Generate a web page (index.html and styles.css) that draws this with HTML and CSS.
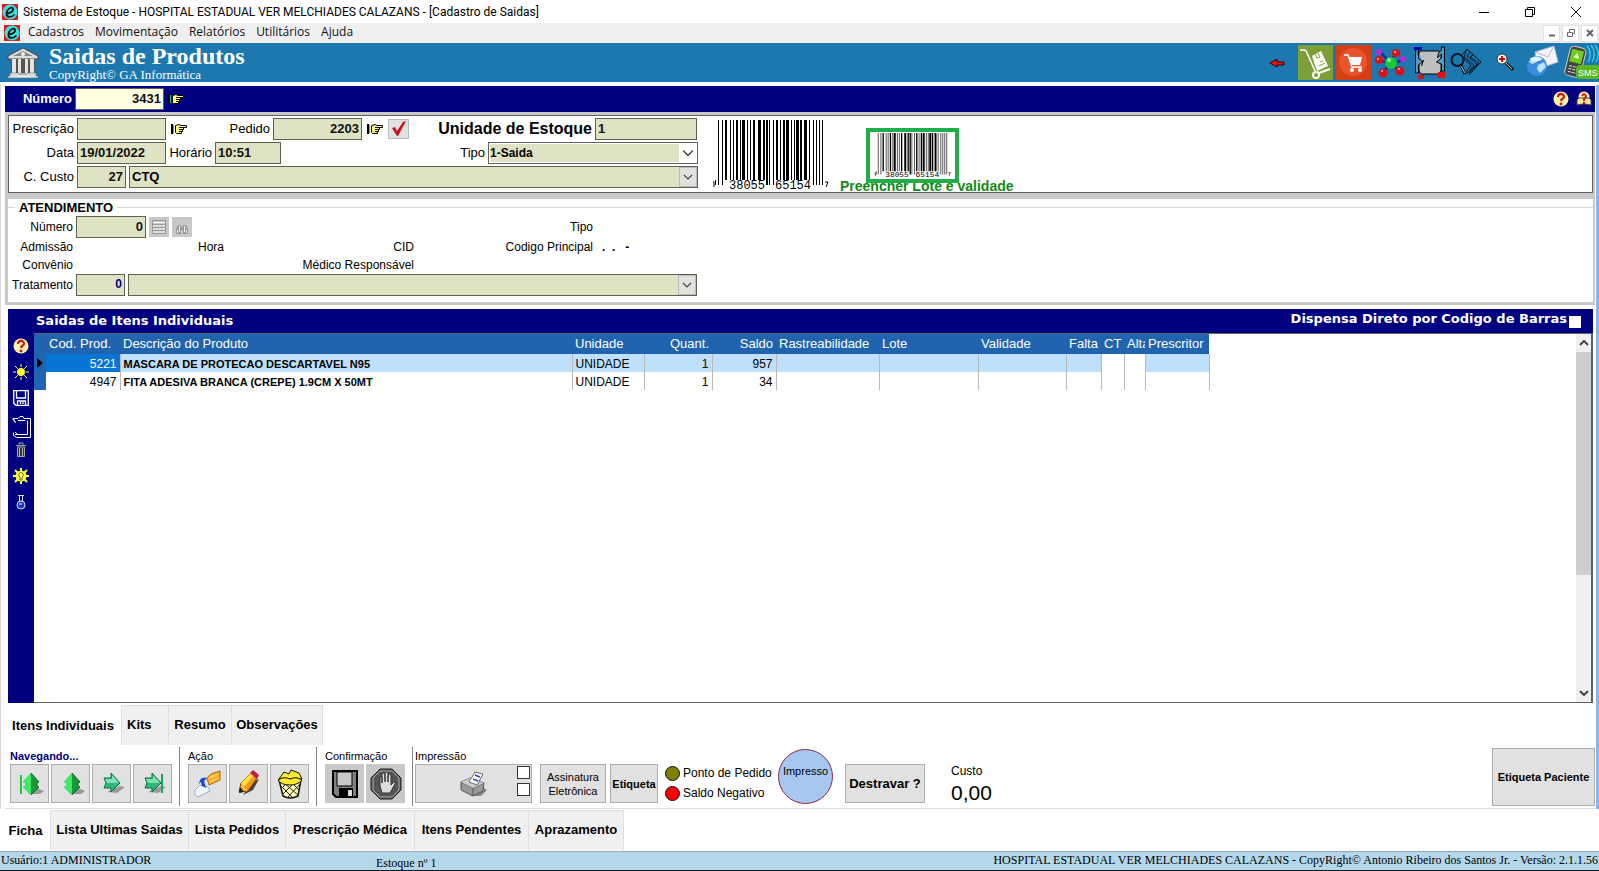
FILE: index.html
```html
<!DOCTYPE html>
<html lang="pt-BR">
<head>
<meta charset="utf-8">
<title>Sistema de Estoque</title>
<link rel="stylesheet" href="styles.css">
</head>
<body>
<svg class="defs" aria-hidden="true">
  <symbol id="logo" viewBox="0 0 16 16"><rect width="16" height="16" fill="#e01818"/><circle cx="8" cy="8" r="7.5" fill="#35e0e0"/><path d="M4.500 9.500C8 9.500 12 7 11 4.500C10 2.500 5.500 4 4.500 9C4 14 9 14 12.500 10.500" fill="none" stroke="#111" stroke-width="1.700"/></symbol>
  <symbol id="hand" viewBox="0 0 16 12"><path d="M0 1h2v10H0z" fill="#000"/><path d="M2 2h1v8H2z" fill="#28b8b8"/><path d="M4.500 2.500L8 1.500l2 1h5.500v2H10.500h2v2h-1v2h-1v2H5.500l-1-1z" fill="#ffff70" stroke="#000"/><path d="M8 4.500h3M8 6.500h4M8 8.500h3" stroke="#000"/></symbol>
  <symbol id="chev" viewBox="0 0 10 6"><path d="M1 1l4 4 4-4" fill="none" stroke="#444" stroke-width="1.200"/></symbol>
  <symbol id="help" viewBox="0 0 16 16"><circle cx="8" cy="8" r="7.500" fill="#fff3a8"/><path d="M5 6c0-4 6-4 6-.5C11 8 8 7.500 8 10" fill="none" stroke="#c81818" stroke-width="2.200"/><circle cx="8" cy="13" r="1.400" fill="#c81818"/></symbol>
  <symbol id="bars" viewBox="0 0 117 72"><path d="M6.500 0v65M10.500 0v65M18.500 0v60M21.500 0v60M28.500 0v60M35.500 0v60M38.500 0v60M57.500 0v65M61.500 0v65M68.500 0v60M79.500 0v60M82.500 0v60M97.500 0v60M101.500 0v65M104.500 0v65M107.500 0v65M110.500 0v65M3.500 60v5" stroke="#000"/><path d="M14 0v60M25 0v60M42 0v60M52 0v60M55 0v65M65 0v60M72 0v60M89 0v60" stroke="#000" stroke-width="2"/><path d="M31.500 0v60M47.500 0v60M75.500 0v60M85.500 0v60M93.500 0v60" stroke="#000" stroke-width="3"/><path d="M1 62h1v5M113 62h3l-2 5" fill="none" stroke="#000"/></symbol>
  <symbol id="arrow-up" viewBox="0 0 32 32"><path d="M14 26h12l4-3-7-3z" fill="#999"/><path d="M17 5l8 9-2 1v3l2 1-8 8-8-8 2-1v-3l-2-1z" fill="#189838"/><path d="M17 5v22l-8-8 2-1v-3l-2-1z" fill="#40e868"/><path d="M17 5l8 9-2 1v3l2 1-8 8" fill="none" stroke="#087020"/></symbol>
  <symbol id="arrow-right" viewBox="0 0 32 32"><path d="M11 24l10 1 8-6-5-1z" fill="#999"/><path d="M8 10h7V5l9 10-9 9v-4H8l2-5z" fill="#30b878" stroke="#087040"/><path d="M9 11h7V7l7 8H11z" fill="#80e0b0"/></symbol>
</svg>

<header class="titlebar">
  <svg class="logo"><use href="#logo"/></svg>
  <h1 class="window-title">Sistema de Estoque - HOSPITAL ESTADUAL VER MELCHIADES CALAZANS - [Cadastro de Saidas]</h1>
  <div class="window-controls">
    <button aria-label="Minimizar"><svg width="12" height="12"><path d="M1 6.500h10" stroke="#000"/></svg></button>
    <button aria-label="Restaurar"><svg width="12" height="12" fill="none" stroke="#000"><path d="M1.500 3.500h7v7h-7zM3.500 3V1.500h7v7H9"/></svg></button>
    <button aria-label="Fechar"><svg width="12" height="12"><path d="M1 1l10 10M11 1L1 11" stroke="#000"/></svg></button>
  </div>
</header>

<nav class="menubar">
  <svg class="logo"><use href="#logo"/></svg>
  <a href="#">Cadastros</a><a href="#">Movimentação</a><a href="#">Relatórios</a><a href="#">Utilitários</a><a href="#">Ajuda</a>
  <div class="mdi">
    <button aria-label="Minimizar janela"><svg width="10" height="10"><path d="M2 7.500h6" stroke="#667" stroke-width="2"/></svg></button>
    <button aria-label="Restaurar janela"><svg width="10" height="10" fill="none" stroke="#667"><path d="M1.500 4.500h5v4h-5zM3.500 4V1.500h5v4H7"/></svg></button>
    <button aria-label="Fechar janela"><svg width="10" height="10"><path d="M2 2l6 6M8 2L2 8" stroke="#667" stroke-width="2"/></svg></button>
  </div>
</nav>

<div class="banner">
  <svg class="temple" viewBox="0 0 32 32"><path d="M1 9L16 1l15 8v3H1z" fill="#ddd" stroke="#444"/><path d="M6 9l10-5 10 5z" fill="#888"/><circle cx="16" cy="7" r="2" fill="#eee"/><path d="M4 12h24v15H4z" fill="#555"/><path d="M5 12h4v14H5zM11 12h3v14h-3zM18 12h3v14h-3zM23 12h4v14h-4z" fill="#e8e4dc"/><path d="M3 26h9v2h8v-2h9v3h2v2H1v-2h2z" fill="#ddd" stroke="#666" stroke-width=".5"/><path d="M12 27h8M11 29h10" stroke="#fff"/></svg>
  <div class="banner-text">
    <h2>Saidas de Produtos</h2>
    <p>CopyRight© GA Informática</p>
  </div>
  <div class="toolbar">
    <button class="tool narrow" aria-label="Voltar"><svg width="16" height="10"><path d="M1 5l7-4v3h7v3H8v2z" fill="#f01010" stroke="#300"/></svg></button>
    <button class="tool" aria-label="Transporte"><svg viewBox="0 0 35 35"><rect width="35" height="35" fill="#7c9f37"/><path d="M2 5h4q2 0 3 3l9 20" fill="none" stroke="#fff" stroke-width="1.600"/><circle cx="18" cy="30" r="3" fill="none" stroke="#fff" stroke-width="2"/><path d="M21 28l11-4" stroke="#fff" stroke-width="2"/><path d="M14 11l9-5 7 15-11 5z" fill="#fff"/><path d="M17 9l2 4 3-1-2-4M22 17l3-1M21 21l6-3" stroke="#7c9f37" fill="none"/></svg></button>
    <button class="tool" aria-label="Compras"><svg viewBox="0 0 35 35"><rect width="35" height="35" fill="#d63f14"/><circle cx="17" cy="17" r="14" fill="#e8542c"/><path d="M8 10h4l4 12h10" fill="none" stroke="#fff" stroke-width="1.500"/><path d="M13 12h13l-2 8h-9z" fill="#fff"/><circle cx="16" cy="25" r="2" fill="#fff"/><circle cx="24" cy="25" r="2" fill="#fff"/></svg></button>
    <button class="tool" aria-label="Moléculas"><svg viewBox="0 0 35 35"><path d="M6 7l10 10L22 8M5 15l11 4 14-4M9 28l7-10 10 8" stroke="#222a90" stroke-width="2.500" fill="none"/><circle cx="17" cy="18" r="6" fill="#18c838"/><circle cx="15" cy="15" r="2" fill="#90ff90"/><g fill="#d81414"><circle cx="22" cy="8" r="4"/><circle cx="5" cy="15" r="4"/><circle cx="9" cy="28" r="4.500"/><circle cx="26" cy="26" r="4.500"/></g><g fill="#c028d8"><circle cx="5" cy="7" r="3"/><circle cx="29" cy="14" r="3"/></g><g fill="#fbb"><circle cx="21" cy="7" r="1"/><circle cx="4" cy="14" r="1"/><circle cx="8" cy="26" r="1"/><circle cx="25" cy="24" r="1"/></g></svg></button>
    <button class="tool" aria-label="Ferramentas"><svg viewBox="0 0 35 35"><path d="M8 6h19l2 3v17l-3 3H9l-2-3V9z" fill="#c0c0c0" stroke="#000"/><path d="M2 2h8v3H2z" fill="#0010b0"/><path d="M3.500 5v23h3v-8l5-5-2 6M6.500 5v8l4 4M32.500 2v24h-3v-7l-5-2 5-4V9l-4 4 1-5 3-3V2z" fill="#4f9fcb" stroke="#000"/><path d="M6 30h6v4H6zM26 27h7v6h-7z" fill="#e01010"/></svg></button>
    <button class="tool" aria-label="Consultar livros"><svg viewBox="0 0 35 35" fill="none" stroke="#06151f"><path d="M13 9l4-5 14 13-12 13M12 12l9 8-6 9M17 4l-3 8 10 8-7 9M20 7l-3 4 10 8-8 9M23 10l-3 2 9 6-9 9"/><circle cx="7.500" cy="15" r="6" stroke-width="2"/><path d="M11 20l4 9" stroke-width="3"/><path d="M11 21l4 7" stroke="#ccc"/></svg></button>
    <button class="tool" aria-label="Ampliar"><svg viewBox="0 0 35 35"><circle cx="14" cy="14" r="5" fill="#fff" stroke="#333"/><path d="M14 11v6M11 14h6" stroke="#d00" stroke-width="2"/><path d="M18 18l7 7" stroke="#111" stroke-width="3"/><path d="M18 18l6 6" stroke="#eec890"/></svg></button>
    <button class="tool" aria-label="E-mail"><svg viewBox="0 0 35 35"><path d="M9 7L28 1l4 16-20 7z" fill="#f4f5fc" stroke="#b5b8d0"/><path d="M9 7l13 5 6-11" fill="none" stroke="#b5b8d0"/><circle cx="11" cy="21" r="10" fill="#3a8be0"/><path d="M3 17q5-8 10-5l-2 5-5 2zM12 20l6-3 2 5-6 6-3-4z" fill="#b9e4ff"/><ellipse cx="10" cy="14" rx="6" ry="2" fill="#e5f6ff"/></svg></button>
    <button class="tool" aria-label="SMS"><svg viewBox="0 0 35 35"><g transform="rotate(14 12 18)"><rect x="3" y="2" width="16" height="30" rx="4" fill="#444" stroke="#ccc"/><rect x="5" y="5" width="12" height="13" fill="#72cc22"/><path d="M6 22h10M6 25h10M6 28h10" stroke="#ddd" stroke-dasharray="3 1"/><path d="M11 8l3 5H8z" fill="#efffca"/></g><path d="M23 1q6 7 1 16M27 0q6 8 1 17M31 0q6 8 1 17" fill="none" stroke="#30c8e8" stroke-width="1.500"/><rect x="12" y="20" width="25" height="14" rx="4" fill="#5ab81c"/><text x="14" y="31" font-family="Liberation Sans, sans-serif" font-size="9" fill="#fff">SMS</text></svg></button>
  </div>
</div>

<main class="page">
  <section class="number-bar">
    <label for="numero">Número</label>
    <input id="numero" class="field num cream" value="3431">
    <svg class="hand"><use href="#hand"/></svg>
    <div class="number-help">
      <svg class="ic16"><use href="#help"/></svg>
      <svg class="ic16" viewBox="0 0 16 16"><circle cx="8" cy="6" r="5.500" fill="#fff3a8"/><path d="M1 14V9l2-2h10l2 2v5l-6-1H7z" fill="#ffe9a0" stroke="#543"/><path d="M6 5q2-4 4 0 0 2-2 3v2M8 11v2" stroke="#c81818" stroke-width="2" fill="none"/></svg>
    </div>
  </section>

  <div class="panels">
    <section class="order">
      <div class="order-form">
        <div class="row">
          <label class="lead" for="presc">Prescrição</label><input id="presc" class="field code">
          <svg class="hand"><use href="#hand"/></svg>
          <label class="lab-pedido" for="pedido">Pedido</label><input id="pedido" class="field code num" value="2203">
          <svg class="hand"><use href="#hand"/></svg>
          <button class="check" aria-label="Confirmar pedido"><svg width="19" height="18"><path d="M3 8l3-1 2 4 6-9 3-1-8 15H8z" fill="#c81020"/></svg></button>
          <label class="lab-unit" for="unid">Unidade de Estoque</label><input id="unid" class="field unit" value="1">
        </div>
        <div class="row">
          <label class="lead" for="data">Data</label><input id="data" class="field code" value="19/01/2022">
          <label class="lab-time" for="hora">Horário</label><input id="hora" class="field time" value="10:51">
          <label class="lab-type" for="tipo">Tipo</label>
          <span class="select framed"><select id="tipo"><option>1-Saida</option></select><svg><use href="#chev"/></svg></span>
        </div>
        <div class="row">
          <label class="lead" for="custo">C. Custo</label><input id="custo" class="field short num" value="27">
          <span class="select wide"><select aria-label="Centro de custo"><option>CTQ</option></select><svg><use href="#chev"/></svg></span>
        </div>
      </div>
      <svg class="barcode" viewBox="0 0 117 72"><use href="#bars" width="117" height="72"/><g class="digits"><text x="17" y="69">38055</text><text x="63" y="69">65154</text></g></svg>
      <div class="fill-lot">
        <button class="lot-btn" aria-label="Preencher lote"><svg viewBox="0 0 117 72" preserveAspectRatio="none"><use href="#bars" width="117" height="72"/><g class="digits"><text x="17" y="69">38055</text><text x="63" y="69">65154</text></g></svg></button>
        <p>Preencher Lote e validade</p>
      </div>
    </section>

    <fieldset class="care">
      <legend>ATENDIMENTO</legend>
      <div class="care-grid">
        <label for="atn">Número</label>
        <div class="care-number"><input id="atn" class="field num" value="0">
          <button class="mini" aria-label="Calendário"><svg width="16" height="16" fill="none" stroke="#fff"><path d="M1.500 1.500h13v13h-13zM1 5.500h14M1 8.500h14M1 11.500h14M4.500 5v10M7.500 5v10M10.500 5v10" stroke="#999"/><path d="M2 3.500h12M2 7h12M2 10h12M2 13h12"/></svg></button>
          <button class="mini" aria-label="Procurar"><svg width="16" height="16"><path d="M2 15v-5l2-4h3v2h2V6h3l2 4v5h-5v-4H7v4z" fill="#999"/><path d="M3.500 11v3M12.500 11v3M5.500 7v6M10.500 7v6" stroke="#eee"/></svg></button>
        </div>
        <span class="tipo">Tipo</span>
        <span class="first">Admissão</span><span>Hora</span><span>CID</span><span>Codigo Principal</span><span class="dots">.&nbsp; .&nbsp;&nbsp; -</span>
        <span class="first">Convênio</span><span></span><span>Médico Responsável</span>
        <label class="first" for="trat">Tratamento</label>
        <div class="treatment"><input id="trat" class="field short num navy" value="0">
          <span class="select wide"><select aria-label="Tratamento"><option></option></select><svg><use href="#chev"/></svg></span></div>
      </div>
    </fieldset>
  </div>

  <section class="items">
    <div class="items-head">
      <h3>Saidas de Itens Individuais</h3>
      <label>Dispensa Direto por Codigo de Barras <input type="checkbox"></label>
    </div>
    <div class="items-body">
      <div class="side">
        <button aria-label="Ajuda"><svg class="ic16"><use href="#help"/></svg></button>
        <button aria-label="Novo"><svg class="ic16" viewBox="0 0 16 16"><path d="M8 0v16M0 8h16M2 2l12 12M14 2L2 14" stroke="#ff4"/><circle cx="8" cy="8" r="4.500" fill="#ff3" stroke="#000080"/></svg></button>
        <button aria-label="Salvar"><svg class="ic16" viewBox="0 0 16 16" fill="none" stroke="#fff" stroke-width="1.300"><path d="M.7.7h14.600v14.600H3l-2.300-2zM3.500 1v7h9V1M4.500 15v-4h8v4M7.500 12v2M10 12v2"/></svg></button>
        <button aria-label="Colar"><svg width="19" height="22" fill="none" stroke="#fff"><path d="M3 5.500L1 3.500V2.500h5l2-2h3l1 2h6.500v19H4.500l-3-2v-3M1.500 3l2 4M6 4.500h7M3 18.500h12.500v-14M3 16l2 2"/></svg></button>
        <button aria-label="Excluir"><svg class="ic16" viewBox="0 0 16 16" fill="#333" stroke="#aaa"><path d="M3 3.500h10M6 2.500V1h4v1.500M4.500 5h7v9.500h-7zM6.500 6v8M9.500 6v8"/></svg></button>
        <button aria-label="Dica"><svg class="ic16" viewBox="0 0 16 16"><path d="M8 0v16M0 8h16M2 2l12 12M14 2L2 14" stroke="#ff4" stroke-width="2"/><circle cx="8" cy="8" r="5.500" fill="#ff3"/><path d="M7 12V9.500q-3-4 1-5 4 1 1 5V12z" fill="#ffa" stroke="#662"/></svg></button>
        <button aria-label="Fórmula"><svg class="ic16" viewBox="0 0 16 16"><path d="M5 1.500h6M6.500 2v5M9.500 2v5" stroke="#ddd"/><circle cx="8" cy="11" r="4" fill="#1838d8" stroke="#ddd"/><path d="M6 10h3" stroke="#fff"/></svg></button>
      </div>
      <div class="grid-wrap">
        <table class="grid">
          <colgroup><col class="c-ind"><col class="c-cod"><col class="c-desc"><col class="c-uni"><col class="c-qt"><col class="c-sal"><col class="c-ras"><col class="c-lot"><col class="c-val"><col class="c-fal"><col class="c-ct"><col class="c-alt"><col class="c-pre"></colgroup>
          <thead><tr><th></th><th>Cod. Prod.</th><th>Descrição do Produto</th><th>Unidade</th><th class="r">Quant.</th><th class="r">Saldo</th><th>Rastreabilidade</th><th>Lote</th><th>Validade</th><th>Falta</th><th>CT</th><th>Alta</th><th>Prescritor</th></tr></thead>
          <tbody>
            <tr class="current"><td class="ind"><svg width="6" height="10"><path d="M0 0l6 5-6 5z"/></svg></td><td class="r key">5221</td><td class="desc">MASCARA DE PROTECAO DESCARTAVEL N95</td><td>UNIDADE</td><td class="r">1</td><td class="r">957</td><td></td><td></td><td></td><td></td><td class="blank"></td><td class="blank"></td><td></td></tr>
            <tr><td class="ind"></td><td class="r">4947</td><td class="desc">FITA ADESIVA BRANCA (CREPE) 1.9CM X 50MT</td><td>UNIDADE</td><td class="r">1</td><td class="r">34</td><td></td><td></td><td></td><td></td><td></td><td></td><td></td></tr>
          </tbody>
        </table>
        <div class="scroll">
          <svg width="10" height="6"><path d="M1 5l4-4 4 4" fill="none" stroke="#444" stroke-width="2"/></svg>
          <div class="thumb"></div>
          <svg width="10" height="6"><path d="M1 1l4 4 4-4" fill="none" stroke="#444" stroke-width="2"/></svg>
        </div>
      </div>
    </div>
  </section>

  <div class="tabs inner">
    <button class="active t-itens">Itens Individuais</button><button class="t-kits">Kits</button><button class="t-res">Resumo</button><button class="t-obs">Observações</button>
  </div>

  <section class="actions">
    <div class="group">
      <h4 class="nav">Navegando...</h4>
      <div class="btns">
        <button aria-label="Primeiro"><svg viewBox="0 0 32 32"><use href="#arrow-up"/><path d="M7 7v19" stroke="#20c840" stroke-width="2"/></svg></button>
        <button aria-label="Anterior"><svg viewBox="0 0 32 32"><use href="#arrow-up"/></svg></button>
        <button aria-label="Próximo"><svg viewBox="0 0 32 32"><use href="#arrow-right"/></svg></button>
        <button aria-label="Último"><svg viewBox="0 0 32 32"><use href="#arrow-right"/><path d="M25 6v19" stroke="#18a850" stroke-width="2"/></svg></button>
      </div>
    </div>
    <div class="group">
      <h4>Ação</h4>
      <div class="btns">
        <button aria-label="Abrir"><svg viewBox="0 0 32 32"><path d="M15 10l4-4 9-3v9l-11 5z" fill="#ffae28" stroke="#b86808"/><path d="M17 10l9-4M18 14l9-4" stroke="#ffe090"/><path d="M3 22l5-5 8 2 2 4-12 6-3-2z" fill="#eef8ff" stroke="#9ac"/><path d="M7 16q1-8 8-6l-3 3 2 7-4-2-1-4z" fill="#1848d0"/></svg></button>
        <button aria-label="Editar"><svg viewBox="0 0 32 32"><path d="M10 27l10-5 6-11-6 2z" fill="#444"/><path d="M6 24l2-9L18 5l6 5-9 13z" fill="#f59a18" stroke="#854008"/><path d="M8 15L18 5l3 2-10 12z" fill="#ffe040"/><path d="M17 5l3-3 6 5-2 4z" fill="#c02040"/><path d="M6 25l1-6 4 5z" fill="#221"/><path d="M8 18l6 5" stroke="#fff3a0"/></svg></button>
        <button aria-label="Excluir"><svg viewBox="0 0 32 32"><path d="M5 11L10 4l5 2 2-4 8 3 3 6z" fill="#ffee30" stroke="#111"/><path d="M5 12h22l-3 16q-8 4-15 0z" fill="#fff8b0" stroke="#111" stroke-width="1.500"/><path d="M6 17l12 12M8 13l16 14M16 13l9 9M26 16L13 30M22 13L8 27M15 13l-8 8" stroke="#222"/><path d="M4 12q6-4 12-1 6-3 12 1-4 5-12 5-9 0-12-5z" fill="#ffe830" stroke="#111"/></svg></button>
      </div>
    </div>
    <div class="group">
      <h4>Confirmação</h4>
      <div class="btns">
        <button class="off" aria-label="Gravar"><svg viewBox="0 0 32 32"><path d="M4 3h24v26H7l-3-3z" fill="#808080" stroke="#000" stroke-width="2"/><path d="M8 4h15v14H8z" fill="#c8c8c8" stroke="#000"/><path d="M10 20h14v9H10z" fill="#000"/><path d="M19 22h4v6h-4z" fill="#ddd"/></svg></button>
        <button class="off" aria-label="Cancelar"><svg viewBox="0 0 32 32"><path d="M10 1h12l9 9v12l-9 9H10l-9-9V10z" fill="#555" stroke="#222"/><path d="M10 3h12l7 7v12l-7 7H10l-7-7V10z" fill="none" stroke="#aaa"/><path d="M10 18V9q1-2 2 0v6V6q2-2 3 0v8-9q2-2 3 0v9-7q2-2 3 0v10l3-3q3 0 1 2l-5 9h-8z" fill="#ddd" stroke="#333"/></svg></button>
      </div>
    </div>
    <div class="group print">
      <h4>Impressão</h4>
      <div class="btns">
        <div class="print-box">
          <button class="print-btn" aria-label="Imprimir"><svg viewBox="0 0 32 32"><path d="M13 28h10l6-6-6-4z" fill="#888"/><path d="M3 14l9-4 14 5-1 8-10 5-12-6z" fill="#999" stroke="#555"/><path d="M3 14l12 6 11-5M15 20v8" fill="none" stroke="#555"/><path d="M3 14l9-4 14 5-11 5z" fill="#ccc"/><path d="M11 14l6-10 8 2-6 11z" fill="#fff" stroke="#667"/><path d="M17 7l5 2M15 11l5 2" stroke="#34d" stroke-width="1.500"/></svg></button>
          <span class="print-checks"><input type="checkbox" aria-label="Imprimir opção 1"><input type="checkbox" aria-label="Imprimir opção 2"></span>
        </div>
      </div>
    </div>
    <button class="text-btn sign">Assinatura Eletrônica</button>
    <button class="text-btn tag">Etiqueta</button>
    <ul class="legend"><li><i class="olive"></i>Ponto de Pedido</li><li><i class="red"></i>Saldo Negativo</li></ul>
    <div class="printed">Impresso</div>
    <button class="text-btn unlock">Destravar ?</button>
    <div class="cost"><span>Custo</span><output>0,00</output></div>
    <button class="text-btn patient">Etiqueta Paciente</button>
  </section>
</main>

<div class="tabs outer">
  <button class="active o-ficha">Ficha</button><button class="o-ult">Lista Ultimas Saidas</button><button class="o-ped">Lista Pedidos</button><button class="o-presc">Prescrição Médica</button><button class="o-pend">Itens Pendentes</button><button class="o-apr">Aprazamento</button>
</div>

<footer class="status">
  <span class="user">Usuário:1 ADMINISTRADOR</span><span class="stock">Estoque nº 1</span><span class="about">HOSPITAL ESTADUAL VER MELCHIADES CALAZANS - CopyRight© Antonio Ribeiro dos Santos Jr. - Versão: 2.1.1.56</span>
</footer>
</body>
</html>
```
FILE: styles.css
```css
* { box-sizing: border-box; }
body { margin: 0; min-height: 100vh; display: flex; flex-direction: column; background: #fff; color: #000; font: 13px/16px "Liberation Sans", Arial, sans-serif; overflow-x: hidden; }
h1, h2, h3, h4, p, ul { margin: 0; padding: 0; font-weight: normal; }
button { padding: 0; border: 0; background: none; font: inherit; color: inherit; }
input, select { margin: 0; font: inherit; color: inherit; }
svg { display: block; flex: none; }
.defs { position: absolute; width: 0; height: 0; }
.ic16 { width: 16px; height: 16px; }

.titlebar { display: flex; align-items: center; height: 23px; padding-left: 2px; font-family: Roboto, "Noto Sans", sans-serif; }
.logo { width: 16px; height: 16px; }
.window-title { margin-left: 5px; font-size: 12px; line-height: 16px; white-space: nowrap; }
.window-controls { margin-left: auto; display: flex; align-self: stretch; }
.window-controls button { width: 46px; display: flex; align-items: center; justify-content: center; }
.menubar { display: flex; align-items: center; height: 20px; padding-left: 4px; background: #efefef; font: 12px/16px "Open Sans", "Noto Sans", sans-serif; }
.menubar a { margin-left: 8px; margin-right: 3px; padding-bottom: 2px; color: #111; text-decoration: none; }
.mdi { margin-left: auto; display: flex; gap: 2px; padding-right: 1px; }
.mdi button { width: 17px; height: 17px; display: flex; align-items: center; justify-content: center; background: #fff; border: 1px solid #e2e2e2; }

.banner { display: flex; align-items: center; height: 39px; padding-left: 7px; background: #1c78ae; color: #fff; }
.temple { width: 32px; height: 32px; }
.banner-text { margin-left: 10px; padding-bottom: 1px; font-family: "Liberation Serif", "Times New Roman", serif; white-space: nowrap; }
.banner-text h2 { font-size: 24px; line-height: 24px; font-weight: bold; }
.banner-text p { font-size: 13px; line-height: 13px; }
.toolbar { margin-left: auto; display: flex; align-items: center; gap: 3px; }
.tool svg { width: 35px; height: 35px; }
.tool.narrow { margin-right: 10px; }
.tool.narrow svg { width: 16px; height: 10px; }

.page { flex: 1; display: flex; flex-direction: column; margin-top: 3px; padding: 1px 1px 0 4px; border-left: 1px solid #d8d8d8; border-right: 3px solid #8ab6ea; }
.number-bar { display: flex; align-items: center; gap: 3px; height: 26px; background: #000080; color: #fff; font-weight: bold; }
.number-bar label { width: 67px; text-align: right; }
.hand { width: 16px; height: 12px; }
.number-bar .hand { margin-left: 1px; }
.number-help { margin-left: auto; display: flex; gap: 7px; padding-right: 3px; }
.field { height: 22px; padding: 0 2px 2px; border: 1px solid #606050; background: #e0e2c4; color: #111; font-weight: bold; }
.num { text-align: right; }
.cream { width: 89px; background: #ffffe1; }
.code { width: 89px; }
.time { width: 66px; }
.short { width: 49px; }
.unit { width: 102px; }
.navy { color: #000080; }

.panels { display: flex; flex-direction: column; gap: 6px; padding: 3px 2px 3px 3px; background: #c8c8c8; }
.order { display: flex; border: 1px solid #606060; height: 78px; background: #fff; }
.order-form { display: flex; flex-direction: column; gap: 2px; padding-top: 2px; }
.row { display: flex; align-items: center; gap: 3px; height: 22px; }
.row label { text-align: right; white-space: nowrap; }
.lead { width: 65px; }
.row .hand { margin: 0 2px; }
.lab-pedido { width: 78px; }
.check { width: 21px; height: 20px; border: 1px solid #bbb; background: #e1e1e1; }
.row .lab-unit { width: 180px; font-size: 16px; font-weight: bold; }
.lab-time { width: 43px; }
.lab-type { width: 201px; }
.select { position: relative; display: block; height: 22px; width: 210px; border: 1px solid #606050; background: #e0e2c4; font-weight: bold; }
.select.wide { width: 569px; }
.select select { width: 100%; height: 20px; padding: 0 2px; border: 0; background: none; appearance: none; }
.select svg { position: absolute; right: 0; top: 0; width: 18px; height: 20px; padding: 6px 3px; background: #e1e1e1; border: 1px solid #bbb; }
.framed { border: 1px solid #606060; background: #fff; padding: 1px; }
.framed select { height: 18px; width: 189px; padding: 0; background: #e0e2c4; font-size: 12px; font-weight: bold; }
.framed svg { background: none; border: 0; }
.barcode { width: 117px; height: 72px; margin: 4px 0 0 14px; }
.digits { font: 12px/12px "Liberation Mono", monospace; }
.barcode, .lot-btn svg { overflow: visible; }
.fill-lot { margin: 12px 0 0 11px; color: #128a12; white-space: nowrap; }
.lot-btn { display: block; position: relative; margin-left: 26px; width: 93px; height: 55px; padding: 0 4px; border: 4px solid #1fae48; background: #fff; }
.lot-btn svg { width: 100%; height: 46px; }
.fill-lot p { margin-top: -4px; font-size: 14px; line-height: 14px; font-weight: bold; }

.care { margin: 0; padding: 0; border: 0; min-width: 0; height: 103px; background: linear-gradient(#d8d8d8, #d8d8d8) 0 8px / 100% 1px no-repeat #fff; }
.care legend { float: left; margin-left: 7px; padding: 1px 4px 0; font-weight: bold; background: #fff; }
.care-grid { clear: both; display: grid; grid-template-columns: 65px 148px 187px 176px 120px; grid-template-rows: 22px 18px 18px 22px; column-gap: 3px; align-items: center; font-size: 12px; text-align: right; white-space: nowrap; }
.care-number { display: flex; align-items: center; gap: 3px; }
.care-number .field { width: 70px; font-size: 13px; }
.mini { width: 20px; height: 20px; display: flex; align-items: center; justify-content: center; background: #c8c8c8; }
.tipo { grid-column: 4; }
.dots { grid-column: 5; padding-left: 6px; text-align: left; font-weight: bold; }
.care-grid .first { grid-column: 1; }
.treatment { grid-column: 2 / -1; display: flex; gap: 3px; }

.items { flex: 1; display: flex; flex-direction: column; margin: 4px 2px 0 3px; }
.items-head { display: flex; justify-content: space-between; height: 24px; padding: 4px 12px 0 28px; background: #000080; color: #fff; font: bold 13px/16px "DejaVu Sans", Verdana, sans-serif; }
.items-head h3 { font-size: 13px; font-weight: bold; }
.items-head label { display: flex; align-items: center; gap: 2px; margin-top: -8px; }
input[type="checkbox"] { appearance: none; width: 13px; height: 13px; border: 1px solid #333; background: #fff; }
.items-head input { border: 0; width: 12px; height: 12px; margin-top: 6px; }
.items-body { flex: 1; display: flex; }
.side { width: 26px; display: flex; flex-direction: column; align-items: center; padding-top: 5px; background: #000080; }
.side button { width: 24px; height: 26px; display: flex; align-items: flex-start; justify-content: center; }
.grid-wrap { flex: 1; display: flex; justify-content: space-between; border: solid #606060; border-width: 1px 2px 1px 0; }
.grid { width: 1175px; table-layout: fixed; border-collapse: collapse; align-self: flex-start; }
.c-ind { width: 12px; } .c-cod { width: 74px; } .c-desc { width: 452px; } .c-uni { width: 72px; } .c-qt { width: 68px; } .c-sal { width: 64px; } .c-ras { width: 103px; } .c-lot { width: 99px; } .c-val { width: 88px; } .c-fal { width: 35px; } .c-ct { width: 23px; } .c-alt { width: 21px; } .c-pre { width: 64px; }
.grid th { height: 20px; padding: 0 0 0 3px; background: #2064b0; color: #fff; font-weight: normal; text-align: left; white-space: nowrap; overflow: hidden; }
.grid th.r { padding-right: 3px; }
.grid td { height: 18px; padding: 1px 3px 0; font-size: 12px; line-height: 16px; white-space: nowrap; border-right: 1px solid #b8b8b8; }
.grid .desc { font-size: 11px; font-weight: bold; }
.grid .r { text-align: right; }
.grid td.ind { background: #2064b0; border: 0; padding: 0 3px; }
.current td { background: #bfe0fb; }
.grid td.key { background: #0874d4; color: #fff; }
.grid td.blank { background: #fff; }
.scroll { width: 15px; display: flex; flex-direction: column; align-items: center; justify-content: space-between; padding: 6px 0; background: #f0f0f0; }
.thumb { width: 15px; height: 223px; margin-top: 6px; margin-bottom: auto; background: #cdcdcd; }

.tabs { display: flex; align-items: stretch; font-weight: bold; }
.tabs button { border: 1px solid #ddd; border-left: 0; border-bottom: 0; background: #f0f0f0; white-space: nowrap; padding-bottom: 2px; }
.tabs .active { background: #fff; border-top-color: transparent; padding: 0; }
.inner { height: 40px; margin-top: 2px; }
.t-itens { width: 117px; } .t-kits { width: 47px; } .tabs .t-kits { text-align: left; padding-left: 5px; } .t-res { width: 63px; } .t-obs { width: 91px; }
.actions { display: flex; align-items: flex-start; height: 63px; margin-top: 1px; border-bottom: 1px solid #ddd; font-size: 11px; line-height: 14px; }
.group { padding: 2px 7px 0 5px; height: 59px; border-right: 1px solid #808080; margin-top: 1px; }
.group + .group { padding-left: 8px; }
.group h4 { font-size: 11px; line-height: 14px; }
.group h4.nav { color: #000080; font-weight: bold; }
.btns { display: flex; gap: 2px; margin-top: 1px; }
.btns button { width: 39px; height: 39px; display: flex; align-items: center; justify-content: center; background: #e1e1e1; border: 1px solid #adadad; }
.btns svg { width: 32px; height: 32px; }
.btns .off { background: #c8c8c8; border-color: #c8c8c8; }
.group.print { border: 0; padding: 2px 8px 0 2px; }
.print-box { position: relative; width: 117px; }
.btns .print-btn { width: 117px; }
.print-checks { position: absolute; right: 2px; top: 2px; display: flex; flex-direction: column; gap: 4px; }
.print-checks input { display: block; }
.text-btn { height: 39px; margin-top: 18px; background: #e1e1e1; border: 1px solid #adadad; }
.sign { width: 66px; }
.tag { width: 48px; margin-left: 4px; font-weight: bold; }
.legend { list-style: none; margin: 17px 0 0 7px; width: 112px; font-size: 12px; white-space: nowrap; }
.legend li { display: flex; align-items: center; gap: 3px; height: 20px; }
.legend i { width: 15px; height: 15px; border: 1px solid #111; border-radius: 50%; }
.olive { background: #808000; }
.red { background: #f00; }
.printed { width: 55px; height: 55px; margin: 3px 12px 0 1px; padding-top: 14px; border: 1px solid #902848; border-radius: 50%; background: #a6c8f0; text-align: center; }
.unlock { width: 80px; font-size: 13px; font-weight: bold; }
.cost { display: flex; flex-direction: column; margin: 18px 0 0 26px; font-size: 12px; }
.cost output { margin-top: 3px; font-size: 21px; line-height: 24px; }
.patient { margin: 2px 0 0 auto; width: 103px; height: 58px; font-weight: bold; }

.outer { height: 40px; margin: 1px 0 1px 1px; }
.o-ficha { width: 50px; } .o-ult { width: 138px; } .o-ped { width: 97px; } .o-presc { width: 129px; } .o-pend { width: 114px; } .o-apr { width: 95px; }
.status { display: flex; align-items: flex-start; height: 20px; background: #b4d8ea; border-top: 1px solid #90a8b0; border-bottom: 1px solid #101820; font: 12px/16px "Liberation Serif", "Times New Roman", serif; padding: 0 1px; white-space: nowrap; }
.user { width: 375px; }
.stock { padding-top: 3px; }
.about { margin-left: auto; }
```
